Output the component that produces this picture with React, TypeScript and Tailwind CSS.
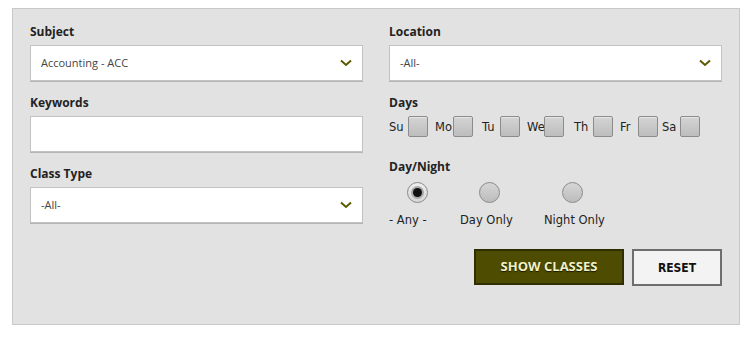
const DAYS = [
  { key: 'Su', cls: 'w-[19px]', gap: '' },
  { key: 'Mo', cls: 'w-[18px]', gap: 'ml-[7px]' },
  { key: 'Tu', cls: 'w-[18px]', gap: 'ml-[9px]' },
  { key: 'We', cls: 'w-[17px]', gap: 'ml-[7px]' },
  { key: 'Th', cls: 'w-[19px]', gap: 'ml-[10px]' },
  { key: 'Fr', cls: 'w-[18px]', gap: 'ml-[7px]' },
  { key: 'Sa', cls: 'w-[18px]', gap: 'ml-[4px]' },
];

const DAY_NIGHT = [
  { label: '- Any -', col: 'w-[71px]', dot: 'ml-[18px]', checked: true },
  { label: 'Day Only', col: 'w-[84px]', dot: 'ml-[19px]', checked: false },
  { label: 'Night Only', col: '', dot: 'ml-[18px]', checked: false },
];

function Chevron() {
  return (
    <svg width="12" height="8" viewBox="0 0 12 8" className="shrink-0">
      <polyline points="1,1.5 6,6 11,1.5" fill="none" stroke="#5c5a00" strokeWidth="2" />
    </svg>
  );
}

function Label({ children }: { children: React.ReactNode }) {
  return (
    <div className="h-[18px] leading-[18px] text-[12px] font-bold text-[#222] mb-1">{children}</div>
  );
}

function Select({ value }: { value: string }) {
  return (
    <div className="h-[36px] bg-white border border-[#c2c2c2] shadow-[0_1px_0_#b5b5b5] flex items-center justify-between pl-[10px] pr-[10px]">
      <span className="text-[11px] text-[#444]">{value}</span>
      <Chevron />
    </div>
  );
}

export default function App() {
  return (
    <div className="w-[750px] h-[340px] bg-white pt-2 pl-3 font-['Open_Sans',sans-serif]">
      <div className="w-[728px] border border-[#c8c8c8] bg-[#e2e2e2] px-[17px] pt-[14px] pb-[38px] grid grid-cols-2 gap-x-[26px]">
        {/* Left column */}
        <div className="flex flex-col gap-[13px]">
          <div>
            <Label>Subject</Label>
            <Select value="Accounting - ACC" />
          </div>
          <div>
            <Label>Keywords</Label>
            <div className="h-[36px] bg-white border border-[#c2c2c2] shadow-[0_1px_0_#b5b5b5]" />
          </div>
          <div>
            <Label>Class Type</Label>
            <Select value="-All-" />
          </div>
        </div>

        {/* Right column */}
        <div className="flex flex-col">
          <div>
            <Label>Location</Label>
            <Select value="-All-" />
          </div>

          <div className="mt-[13px]">
            <Label>Days</Label>
            <div className="flex items-center mt-[4px] font-['DejaVu_Sans',sans-serif] text-[11.5px] leading-4 text-[#222]">
              {DAYS.map((d) => (
                <div key={d.key} className={`flex items-center ${d.gap}`}>
                  <span className={d.cls}>{d.key}</span>
                  <span className="w-[20px] h-[21px] rounded-[2px] border border-[#8c8c8c] bg-gradient-to-b from-[#d4d4d4] to-[#bdbdbd] shadow-[inset_0_1px_0_#e6e6e6]" />
                </div>
              ))}
            </div>
          </div>

          <div className="mt-[21px]">
            <Label>Day/Night</Label>
            <div className="flex mt-[6px] font-['DejaVu_Sans',sans-serif] text-[11.5px] leading-4 text-[#222]">
              {DAY_NIGHT.map((o) => (
                <div key={o.label} className={`flex flex-col ${o.col}`}>
                  <span
                    className={`${o.dot} w-[21px] h-[21px] rounded-full border border-[#8a8a8a] flex items-center justify-center ${
                      o.checked
                        ? 'bg-gradient-to-b from-[#eeeeee] to-[#d6d6d6]'
                        : 'bg-gradient-to-b from-[#d6d6d6] to-[#bcbcbc]'
                    }`}
                  >
                    {o.checked && (
                      <span className="w-[9px] h-[9px] rounded-full bg-[#111] shadow-[0_0_0_2px_#a8a8a8]" />
                    )}
                  </span>
                  <span className="mt-[9px] whitespace-nowrap">{o.label}</span>
                </div>
              ))}
            </div>
          </div>

          <div className="flex justify-end items-start gap-2 mt-[21px]">
            <button className="w-[150px] h-[36px] bg-[#4d4c00] border-2 border-[#2f2e00] text-[#f3f0c6] text-[13px] font-bold [text-shadow:0_1px_1px_#1a1a00]">
              SHOW CLASSES
            </button>
            <button className="w-[90px] h-[37px] bg-[#f3f3f3] border-2 border-[#6e6e6e] text-[#111] text-[12px] font-bold font-['DejaVu_Sans_Condensed','DejaVu_Sans',sans-serif]">
              RESET
            </button>
          </div>
        </div>
      </div>
    </div>
  );
}
